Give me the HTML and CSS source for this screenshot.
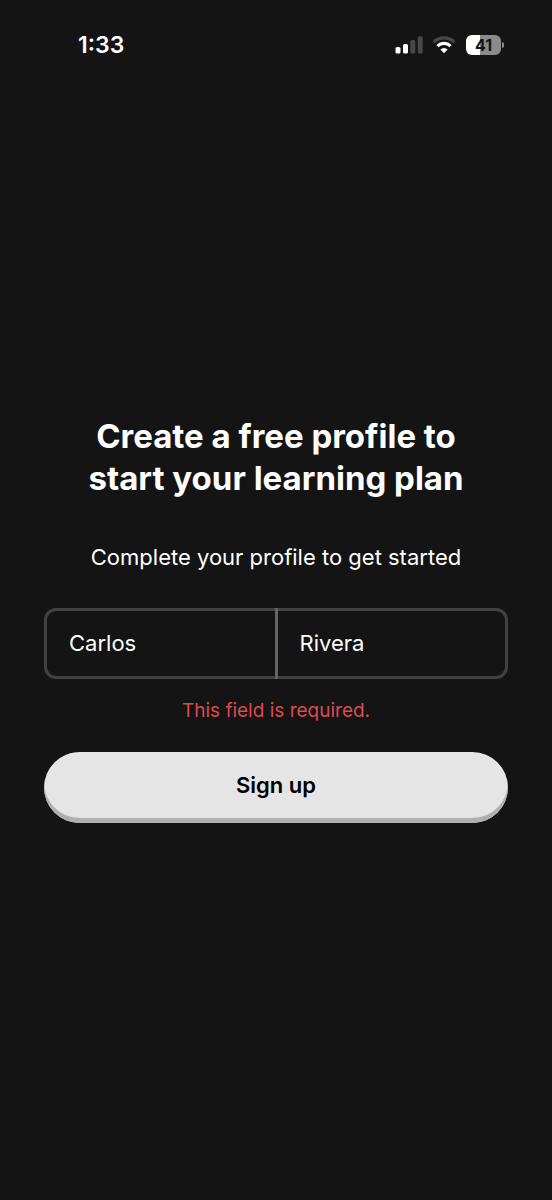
FILE: index.html
```
<!DOCTYPE html>
<html lang="en">
<head>
<meta charset="utf-8">
<meta name="viewport" content="width=device-width, initial-scale=1">
<title>Create a free profile</title>
<link rel="stylesheet" href="styles.css">
</head>
<body>
<header class="status">
  <time class="clock">1:33</time>
  <div class="indicators">
    <svg class="signal" width="28" height="18" viewBox="0 0 28 18" aria-hidden="true">
      <rect x="0.5" y="11" width="5" height="6.5" rx="1.5" fill="#fff"/>
      <rect x="8" y="8" width="5" height="9.5" rx="1.5" fill="#fff"/>
      <rect x="15.3" y="4" width="5" height="13.5" rx="1.5" fill="#484848"/>
      <rect x="22.7" y="0.3" width="5" height="17.2" rx="1.5" fill="#484848"/>
    </svg>
    <svg class="wifi" width="24" height="18" viewBox="0 0 24 18" aria-hidden="true">
      <path d="M1.8 6a14.8 14.8 0 0 1 20.4 0" fill="none" stroke="#484848" stroke-width="3.2"/>
      <path d="M5.4 10.1a9.6 9.6 0 0 1 13.2 0" fill="none" stroke="#fff" stroke-width="3.2"/>
      <path d="M12 17.2l-3.6-3.6a5.4 5.4 0 0 1 7.2 0z" fill="#fff"/>
    </svg>
    <div class="battery"><span class="level">41</span><span class="cap"></span></div>
  </div>
</header>
<main class="page">
  <h1 class="title">Create a free profile to<br>start your learning plan</h1>
  <p class="intro">Complete your profile to get started</p>
  <form class="form">
    <div class="names">
      <input class="name" type="text" aria-label="First name" value="Carlos">
      <input class="name" type="text" aria-label="Last name" value="Rivera">
    </div>
    <p class="error" role="alert">This field is required.</p>
    <button class="submit" type="button">Sign up</button>
  </form>
</main>
</body>
</html>
```
FILE: styles.css
```
* { box-sizing: border-box; }
body {
  margin: 0;
  min-height: 100vh;
  display: flex;
  flex-direction: column;
  background: #141414;
  color: #fff;
  font-family: Inter, sans-serif;
}
.status {
  display: flex;
  justify-content: space-between;
  align-items: center;
  height: 90px;
  padding: 0 48px 0 78px;
}
.clock { font-size: 23px; line-height: 28px; font-weight: 600; }
.indicators { display: flex; align-items: center; gap: 9px; }
.battery { display: flex; align-items: center; gap: 1px; margin-left: 1px; }
.level {
  width: 35px;
  border-radius: 6px;
  background: linear-gradient(90deg, #fff 41%, #8b8b8b 41%);
  color: #141414;
  font-size: 16px;
  line-height: 20px;
  font-weight: 700;
  text-align: center;
}
.cap { width: 2px; height: 6px; border-radius: 0 2px 2px 0; background: #8b8b8b; }
.page {
  flex: 1;
  display: flex;
  flex-direction: column;
  justify-content: center;
  padding: 44px 44px 96px;
  text-align: center;
}
.title { margin: 0 0 40px; font-size: 33px; line-height: 42px; font-weight: 700; }
.intro { margin: 0 0 33px; font-size: 22px; line-height: 36px; }
.names {
  display: flex;
  border: 3px solid #414141;
  border-radius: 12px;
}
.name {
  flex: 1;
  min-width: 0;
  height: 65px;
  padding: 0 22px 2px;
  border: 0;
  background: none;
  color: #fff;
  font-family: inherit;
  font-size: 22px;
  line-height: 28px;
}
.name + .name {
  height: 71px;
  margin: -3px 0;
  border-left: 3px solid #656565;
}
.error { margin: 18px 0 27px; font-size: 19px; line-height: 28px; color: #dc4b4f; }
.submit {
  display: block;
  width: 100%;
  height: 71px;
  padding: 0 0 6px;
  border: 0;
  border-radius: 36px;
  background: #e5e5e5;
  box-shadow: inset 0 -5px #b0b0b0;
  color: #000;
  font-family: inherit;
  font-size: 22px;
  line-height: 28px;
  font-weight: 600;
}
```
